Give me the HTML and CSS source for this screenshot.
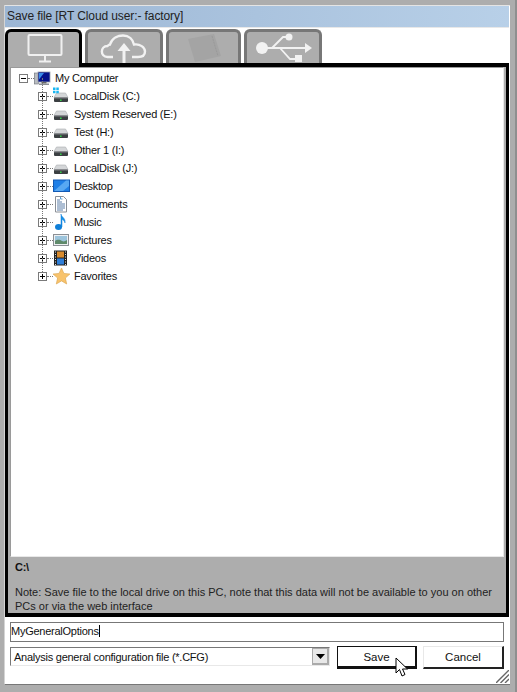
FILE: index.html
```html
<!DOCTYPE html>
<html>
<head>
<meta charset="utf-8">
<title>Save file</title>
<link rel="stylesheet" href="styles.css">
</head>
<body>
<svg class="defs" width="0" height="0">
  <defs>
    <symbol id="disk" viewBox="0 0 18 18">
      <path d="M3.500 6h9l2.500 4.500H1z" fill="#d4d6d8" stroke="#a9acb0" stroke-width=".6"/>
      <rect x="1" y="10.500" width="14" height="4.500" rx="1" fill="#3b3f42"/>
      <rect x="1.500" y="10.200" width="13" height="1.200" fill="#8d9093"/>
      <rect x="7" y="12.500" width="1.600" height="1.500" fill="#35d04a"/>
    </symbol>
    <symbol id="plus" viewBox="0 0 9 9">
      <rect x=".5" y=".5" width="8" height="8" fill="#fff" stroke="#7a7a7a"/>
      <path d="M2 4.500h5M4.500 2v5" stroke="#000"/>
    </symbol>
  </defs>
</svg>
<div class="window">
  <div class="titlebar">Save file [RT Cloud user:- factory]</div>
  <div class="tabs">
    <div class="tab tab-active">
      <svg class="tab-ico" width="52" height="32" viewBox="0 0 52 32"><rect x="10.500" y="1" width="33" height="20" rx="1" fill="none" stroke="#f0f0f0" stroke-width="2"/><path d="M27 21v6M21 27.500h12" stroke="#f0f0f0" stroke-width="2"/></svg>
    </div>
    <div class="tab">
      <svg class="tab-ico" width="52" height="32" viewBox="0 0 52 32"><path d="M15 23H9.500c-7.500 0-7.500-11 0-11 1-1 1.500-1.500 2.500-1.500C14 4 20 1.500 25 1.500c6 0 10 4 11 9 6-1 11 3 11 7s-3 5.500-7 5.500h-6" fill="none" stroke="#f2f2f2" stroke-width="2.400"/><path d="M26 32V14" stroke="#f2f2f2" stroke-width="3"/><path d="M26 9l6.500 8h-13z" fill="#f2f2f2"/></svg>
    </div>
    <div class="tab tab-narrow">
      <svg class="tab-ico" width="52" height="32" viewBox="0 0 52 32"><path d="M10 5l26-5 7 22-26 6z" fill="#a4a4a4"/><path d="M34 2l6 20" stroke="#999" stroke-dasharray="2 1"/></svg>
    </div>
    <div class="tab">
      <svg class="tab-ico" width="60" height="32" viewBox="0 0 60 32"><circle cx="9" cy="14" r="6" fill="#f2f2f2"/><path d="M9 14h45M19 14L30 3h3M27 14l10 11h5" fill="none" stroke="#f2f2f2" stroke-width="1.800"/><circle cx="36" cy="3" r="3.500" fill="#f2f2f2"/><rect x="42" y="21" width="7" height="7" fill="#f2f2f2"/><path d="M52 9l7 5-7 5z" fill="#f2f2f2"/></svg>
    </div>
    <div class="tab-rest"></div>
  </div>
  <div class="frame">
    <div class="tree">
      <div class="root-row">
        <svg class="exp" width="9" height="9" viewBox="0 0 9 9"><rect x=".5" y=".5" width="8" height="8" fill="#fff" stroke="#7a7a7a"/><path d="M2 4.500h5" stroke="#000"/></svg>
        <span class="conn"></span>
        <svg class="ico" width="18" height="18" viewBox="0 0 18 18"><rect x="0.300" y="4" width="4" height="11" fill="#b9bcc0" stroke="#6c7078" stroke-width=".6"/><rect x="4" y="3" width="12" height="10" fill="#06128a" stroke="#9aa2ac" stroke-width=".8"/><path d="M5 4h5l-5 6.500z" fill="#3a8be8"/><rect x="7.500" y="13" width="5" height="1.500" fill="#666"/><rect x="5" y="14.500" width="10" height="1.500" fill="#8b8f94"/></svg>
        <span class="label">My Computer</span>
      </div>
      <ul class="children">
        <li class="row">
          <svg class="exp" width="9" height="9"><use href="#plus"/></svg><span class="conn"></span>
          <svg class="ico" width="18" height="18" viewBox="0 0 18 18"><use href="#disk" width="18" height="18"/><path d="M0 .5h2.500V3H0zM3.300 .5h2.500V3H3.300zM0 3.800h2.500v2.500H0zM3.300 3.800h2.500v2.500H3.300z" fill="#19b5f1"/></svg>
          <span class="label">LocalDisk (C:)</span>
        </li>
        <li class="row">
          <svg class="exp" width="9" height="9"><use href="#plus"/></svg><span class="conn"></span>
          <svg class="ico" width="18" height="18"><use href="#disk"/></svg>
          <span class="label">System Reserved (E:)</span>
        </li>
        <li class="row">
          <svg class="exp" width="9" height="9"><use href="#plus"/></svg><span class="conn"></span>
          <svg class="ico" width="18" height="18"><use href="#disk"/></svg>
          <span class="label">Test (H:)</span>
        </li>
        <li class="row">
          <svg class="exp" width="9" height="9"><use href="#plus"/></svg><span class="conn"></span>
          <svg class="ico" width="18" height="18"><use href="#disk"/></svg>
          <span class="label">Other 1 (I:)</span>
        </li>
        <li class="row">
          <svg class="exp" width="9" height="9"><use href="#plus"/></svg><span class="conn"></span>
          <svg class="ico" width="18" height="18"><use href="#disk"/></svg>
          <span class="label">LocalDisk (J:)</span>
        </li>
        <li class="row">
          <svg class="exp" width="9" height="9"><use href="#plus"/></svg><span class="conn"></span>
          <svg class="ico" width="18" height="18" viewBox="0 0 18 18"><rect x=".5" y="3" width="16" height="11.500" fill="#1f7fe6" stroke="#1259b4"/><path d="M1 14L13 3.500h3V9L10 14z" fill="#58a8f2"/></svg>
          <span class="label">Desktop</span>
        </li>
        <li class="row">
          <svg class="exp" width="9" height="9"><use href="#plus"/></svg><span class="conn"></span>
          <svg class="ico" width="18" height="18" viewBox="0 0 18 18"><path d="M2.500 1.500h8l3 3v12.500h-11z" fill="#fff" stroke="#8a8f96"/><path d="M4 5h3M4 7h5M4 9h8M4 11h8M4 13h8M4 15h6" stroke="#5c7fa8"/><path d="M7.500 2v2h2" fill="none" stroke="#5aa0d8"/></svg>
          <span class="label">Documents</span>
        </li>
        <li class="row">
          <svg class="exp" width="9" height="9"><use href="#plus"/></svg><span class="conn"></span>
          <svg class="ico" width="18" height="18" viewBox="0 0 18 18"><ellipse cx="5.500" cy="14" rx="3.500" ry="3" fill="#0f7fd8"/><path d="M8 14V1c0 3 5 4 4 9-.5-2-2-3.500-3-3.500V14z" fill="#1590e6" stroke="#0f7fd8" stroke-width=".5"/></svg>
          <span class="label">Music</span>
        </li>
        <li class="row">
          <svg class="exp" width="9" height="9"><use href="#plus"/></svg><span class="conn"></span>
          <svg class="ico" width="18" height="18" viewBox="0 0 18 18"><rect x=".5" y="3.500" width="15" height="11" fill="#eef0f2" stroke="#8b8f94"/><rect x="2" y="5" width="12" height="8" fill="#9cc4dc"/><path d="M2 10c3-2 5-1 7 0s3 0 5-1v4H2z" fill="#5f8a6a"/></svg>
          <span class="label">Pictures</span>
        </li>
        <li class="row">
          <svg class="exp" width="9" height="9"><use href="#plus"/></svg><span class="conn"></span>
          <svg class="ico" width="18" height="18" viewBox="0 0 18 18"><rect x="1" y="1.500" width="13" height="15" fill="#222"/><path d="M2 3h1M2 5.500h1M2 8h1M2 10.500h1M2 13h1M2 15.500h1M12 3h1M12 5.500h1M12 8h1M12 10.500h1M12 13h1M12 15.500h1" stroke="#ddd"/><rect x="4" y="2.500" width="7" height="6" fill="#d88a2c"/><rect x="4" y="9.500" width="7" height="6" fill="#2f7fd8"/></svg>
          <span class="label">Videos</span>
        </li>
        <li class="row">
          <svg class="exp" width="9" height="9"><use href="#plus"/></svg><span class="conn"></span>
          <svg class="ico" width="18" height="18" viewBox="0 0 18 18"><path d="M8.500 1l2.400 5.400 6 .6-4.500 4 1.300 6-5.200-3.100L3.300 17l1.300-6L0 7l6-.6z" fill="#f8c36c" stroke="#d9a24e" stroke-width=".6"/></svg>
          <span class="label">Favorites</span>
        </li>
      </ul>
    </div>
    <div class="info">
      <div class="path">C:\</div>
      <div class="note">Note: Save file to the local drive on this PC, note that this data will not be available to you on other PCs or via the web interface</div>
    </div>
  </div>
  <div class="name-row"><span class="name-text">MyGeneralOptions</span></div>
  <div class="action-row">
    <div class="select">
      <span class="select-text">Analysis general configuration file (*.CFG)</span>
      <span class="select-btn"><svg width="9" height="5" viewBox="0 0 9 5"><path d="M0 0h9L4.500 5z" fill="#000"/></svg></span>
    </div>
    <button class="btn btn-default">Save</button>
    <button class="btn btn-cancel">Cancel</button>
  </div>
  <svg class="cursor" width="14" height="21" viewBox="0 0 14 21"><path d="M1 1v15l3.500-3.500L7 19l3-1.500L7.500 12H12.500z" fill="#fff" stroke="#000"/></svg>
  <svg class="grip" width="13" height="13" viewBox="0 0 13 13"><path d="M0 13L13 0M4.500 13L13 4.500M9 13l4-4" stroke="#666" stroke-width="1.400"/></svg>
</div>
</body>
</html>
```
FILE: styles.css
```css
* { box-sizing: border-box; }
html, body { margin: 0; height: 100%; }
body {
  background: #adadad;
  padding: 5px 5px 0 5px;
  border-right: 2px solid #8f8f8f;
  font-family: "Liberation Sans", Arial, sans-serif;
  font-size: 11px;
  letter-spacing: -.25px;
  color: #111;
  overflow: hidden;
}
.defs { position: absolute; }
.window {
  position: relative;
  height: 679px;
  background: #fff;
  box-shadow: -1px 0 0 #d4d4d4, 0 1px 0 #777;
  border-top: 1px solid #e4e4e4;
}
.titlebar {
  height: 22px;
  padding: 3px 2px;
  font-size: 12px;
  letter-spacing: -.1px;
  color: #222;
  margin-right: 1px;
  background: linear-gradient(90deg, #9cb6d4, #b8d0e8);
  border-bottom: 1px solid #e8e8e8;
}
.tabs {
  display: flex;
  height: 35px;
  padding-top: 1px;
  gap: 3px;
  align-items: stretch;
}
.tab {
  width: 78px;
  border: 3px solid #777;
  border-bottom: 0;
  border-radius: 6px 6px 0 0;
  background: #adadad;
  display: flex;
  justify-content: center;
  overflow: hidden;
  padding-top: 2px;
}
.tab-ico { overflow: visible; flex: none; }
.tab-active {
  width: 77px;
  border-color: #000;
  height: 38px;
  position: relative;
  z-index: 1;
}
.tab-narrow { width: 75px; }
.tab-rest { flex: 1; }
.frame {
  margin-right: 1px;
  height: 554px;
  border: solid #000;
  border-width: 4px 3px;
  background: #adadad;
  display: flex;
  flex-direction: column;
}
.tree {
  flex: none;
  height: 490px;
  margin: 0 2px;
  border: 1px solid #9a9a9a;
  border-right-color: #e8e8e8;
  border-bottom-color: #e8e8e8;
  background: #fff;
  padding: 1px 0 0 8px;
}
.root-row, .row { display: flex; align-items: center; height: 18px; }
.children { list-style: none; margin: 0; padding: 0 0 0 19px; }
.row { position: relative; }
.row::before {
  content: "";
  position: absolute;
  left: 4px;
  top: -9px;
  height: 18px;
  border-left: 1px dotted #777;
}
.exp { flex: none; position: relative; }
.conn { width: 6px; border-top: 1px dotted #777; flex: none; }
.ico { flex: none; }
.label { margin-left: 3px; white-space: nowrap; color: #111; }
.info { padding: 3px 6px 0 7px; flex: 1; color: #111; line-height: 14px; }
.path { font-weight: bold; height: 25px; line-height: 15px; }
.note { color: #222; letter-spacing: 0; }
.name-row {
  margin: 5px 6px 0 5px;
  height: 20px;
  border: 1px solid #777;
  padding: 2px 0 0 0;
  white-space: nowrap;
}
.name-text { border-right: 1px solid #000; }
.action-row { display: flex; align-items: flex-start; margin: 4px 6px 0 5px; }
.select {
  width: 320px;
  height: 19px;
  margin-top: 1px;
  border: 1px solid #777;
  border-right-color: #e8e8e8;
  border-bottom-color: #e8e8e8;
  padding: 3px 0 0 3px;
  display: flex;
  justify-content: space-between;
}
.select-btn {
  width: 17px;
  height: 17px;
  margin-top: -3px;
  background: #e8e8e8;
  border: 1px solid #aaa;
  border-width: 1px 2px 2px 1px;
  display: flex;
  align-items: center;
  justify-content: center;
}
.btn {
  font: inherit;
  font-size: 11.5px;
  color: #111;
  background: #fff;
  height: 23px;
  padding: 0;
}
.btn-default {
  width: 80px;
  margin-left: 7px;
  border: solid #111;
  border-width: 1px 2px 3px 1px;
}
.btn-cancel {
  width: 81px;
  margin-left: 6px;
  border: solid #222;
  border-width: 1px 2px 2px 1px;
  border-top-color: #e8e8e8;
  border-left-color: #e8e8e8;
}
.cursor { position: absolute; left: 390px; top: 651px; }
.grip { position: absolute; right: 1px; bottom: 1px; }
```
